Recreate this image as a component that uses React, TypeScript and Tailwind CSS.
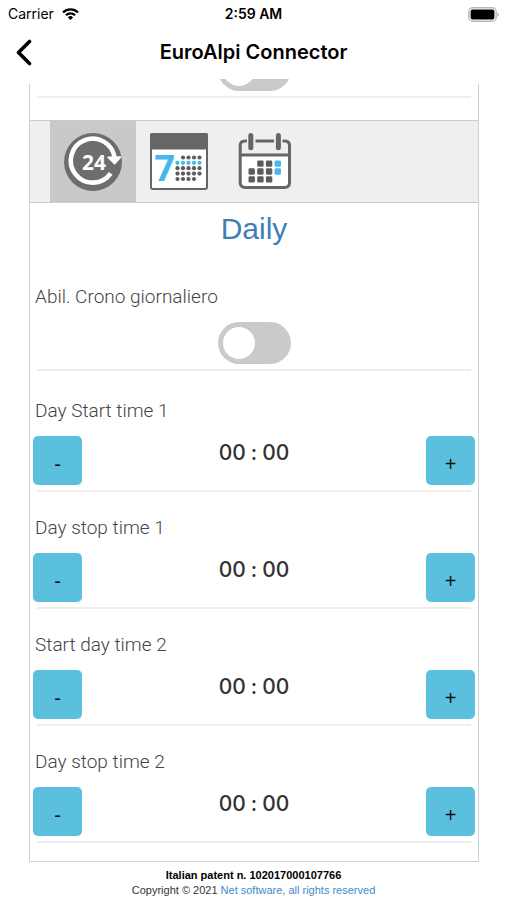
import React, { useState } from 'react';

type Tab = 'daily' | 'weekly' | 'monthly';

interface TimeSlot {
  id: string;
  label: string;
  minutes: number;
}

const STEP = 15;
const DAY = 24 * 60;

const INITIAL_SLOTS: TimeSlot[] = [
  { id: 'start-1', label: 'Day Start time 1', minutes: 0 },
  { id: 'stop-1', label: 'Day stop time 1', minutes: 0 },
  { id: 'start-2', label: 'Start day time 2', minutes: 0 },
  { id: 'stop-2', label: 'Day stop time 2', minutes: 0 },
];

const pad = (n: number) => String(n).padStart(2, '0');

const WifiIcon = () => (
  <svg width="17" height="12" viewBox="0 0 17 12" fill="none" stroke="#000" strokeWidth="2.2">
    <path d="M1 4.4a10.6 10.6 0 0 1 15 0" />
    <path d="M3.9 7.3a6.5 6.5 0 0 1 9.2 0" />
    <path d="M8.5 12 5.9 9.4a3.7 3.7 0 0 1 5.2 0z" fill="#000" stroke="none" />
  </svg>
);

const BatteryIcon = () => (
  <svg width="33" height="15" viewBox="0 0 33 15">
    <rect x="2.8" y="0.8" width="27.4" height="13.4" rx="4" fill="#fff" stroke="#b8b8b8" strokeWidth="1.4" />
    <rect x="4.6" y="2.6" width="23.8" height="9.8" rx="2" fill="#000" />
    <path d="M31.6 5.4c1.4.6 1.4 3.6 0 4.2z" fill="#999" />
  </svg>
);

const DailyIcon = () => (
  <svg width="58" height="58" viewBox="0 0 58 58">
    <circle cx="29" cy="29" r="29" fill="#6d6d6d" />
    <path d="M46.7 40.4A22 22 0 1 1 50.6 25" fill="none" stroke="#fff" strokeWidth="4.6" />
    <path d="M44 24.2 56.600 24 50.6 30.600z" fill="#fff" stroke="#fff" strokeWidth="1.6" strokeLinejoin="round" />
    <text x="30" y="36.500" textAnchor="middle" fontSize="21" fontWeight="700" fontFamily="'Open Sans', sans-serif" fill="#fff">24</text>
  </svg>
);

const WeeklyIcon = () => {
  const xs = [27.5, 33, 38.5, 44, 49.5];
  const ys = [24.5, 29.8, 35.2, 40.6, 46];
  return (
    <svg width="58" height="57" viewBox="0 0 58 57" className="overflow-visible">
      <rect x="1" y="1" width="56" height="55" rx="2" fill="#fff" stroke="#666" strokeWidth="2" />
      <rect x="0" y="0" width="58" height="16.5" rx="1.5" fill="#666" />
      <text x="14.5" y="48" textAnchor="middle" fontSize="36" fontWeight="700" fontFamily="'Open Sans', sans-serif" fill="#43b7ee">7</text>
      {ys.map((y, row) =>
        xs.map((x, col) => {
          if ((row === 0 && col === 0) || (row === 4 && col === 4)) return null;
          return <circle key={`${x}-${y}`} cx={x} cy={y} r="2.1" fill={row === 1 ? '#43b7ee' : '#5c5c5c'} />;
        })
      )}
    </svg>
  );
};

const MonthlyIcon = () => {
  const xs = [13.7, 22.4, 31.1, 39.8];
  const ys = [30.6, 38.5, 46.4];
  return (
    <svg width="54" height="57" viewBox="0 0 54 57">
      <path d="M2 22h49.5v28q0 4.500-4.500 4.500H6.500Q2 54.500 2 50z" fill="#fff" />
      <g fill="none" stroke="#666" strokeWidth="3">
        <path d="M9 8H7Q2.200 8 2.200 12.500V49.500Q2.200 54.500 7.200 54.500H46.500Q51.500 54.500 51.500 49.500V12.500Q51.500 8 46.700 8H44.500" />
        <path d="M17.500 8H36" />
        <path d="M2 22H51.500" />
        <path d="M12.800 2.500V14.800M40.400 2.500V14.800" strokeWidth="5" strokeLinecap="round" />
      </g>
      {ys.map((y, row) =>
        xs.map((x, col) => {
          if ((row === 0 && col === 0) || (row === 2 && col === 3)) return null;
          return <rect key={`${x}-${y}`} x={x - 3.2} y={y - 3.2} width="6.4" height="6.4" rx="1.4" fill={col === 3 ? '#43b7ee' : '#5c5c5c'} />;
        })
      )}
    </svg>
  );
};

const TABS: { id: Tab; title: string; Icon: React.FC }[] = [
  { id: 'daily', title: 'Daily', Icon: DailyIcon },
  { id: 'weekly', title: 'Weekly', Icon: WeeklyIcon },
  { id: 'monthly', title: 'Monthly', Icon: MonthlyIcon },
];

interface SwitchProps {
  id?: string;
  label?: string;
  checked: boolean;
  onChange: (checked: boolean) => void;
}

const Switch: React.FC<SwitchProps> = ({ id, label, checked, onChange }) => (
  <input
    id={id}
    type="checkbox"
    aria-label={label}
    checked={checked}
    onChange={(e) => onChange(e.target.checked)}
    className="relative block h-[42px] w-[73px] shrink-0 cursor-pointer appearance-none rounded-full bg-[#cacaca] transition-colors before:absolute before:left-[5px] before:top-[5px] before:size-8 before:rounded-full before:bg-white before:transition-transform checked:bg-[#5bc0de] checked:before:translate-x-[31px]"
  />
);

const Divider = () => <hr className="mx-[7px] h-0.5 border-0 bg-[#eeeeee]" />;

interface TimeRowProps {
  slot: TimeSlot;
  onStep: (delta: number) => void;
}

const labelText = 'px-[5px] font-[Roboto,sans-serif] text-[19px] leading-6 font-light text-[#444]';
const stepButton = 'size-[49px] rounded-[5px] bg-[#5bc0de] pt-1.5 text-xl leading-6 text-[#111]';

const TimeRow: React.FC<TimeRowProps> = ({ slot, onStep }) => (
  <div className="pt-6" role="group" aria-labelledby={slot.id}>
    <div id={slot.id} className={labelText}>{slot.label}</div>
    <div className="mt-[13px] mb-[5px] flex items-start justify-between px-[3px]">
      <button type="button" className={stepButton} onClick={() => onStep(-STEP)}>-</button>
      <div className="flex gap-[5px] pt-[5px] font-[Inter,sans-serif] text-[21px] leading-6 font-medium text-[#333]">
        <span>{pad(Math.floor(slot.minutes / 60))}</span>
        <span>:</span>
        <span>{pad(slot.minutes % 60)}</span>
      </div>
      <button type="button" className={stepButton} onClick={() => onStep(STEP)}>+</button>
    </div>
    <Divider />
  </div>
);

export default function App() {
  const [tab, setTab] = useState<Tab>('daily');
  const [mainEnabled, setMainEnabled] = useState(false);
  const [dailyEnabled, setDailyEnabled] = useState(false);
  const [slots, setSlots] = useState(INITIAL_SLOTS);

  const handleStep = (id: string, delta: number) => {
    setSlots((prev) =>
      prev.map((s) => (s.id === id ? { ...s, minutes: (s.minutes + delta + DAY) % DAY } : s))
    );
  };

  return (
    <div className="min-h-screen bg-white font-['Liberation_Sans',Arial,sans-serif] text-black">
      {/* Status bar */}
      <div className="grid h-7 grid-cols-3 items-center px-2 font-[Inter,sans-serif] text-sm">
        <div className="flex items-center gap-2">
          <span>Carrier</span>
          <WifiIcon />
        </div>
        <div className="text-center font-semibold">2:59 AM</div>
        <div className="flex justify-end">
          <BatteryIcon />
        </div>
      </div>

      {/* Navigation bar */}
      <header className="grid h-14 grid-cols-[48px_1fr_48px] items-start pt-2">
        <button type="button" aria-label="Back" className="flex h-8 items-center justify-center">
          <svg width="16" height="27" viewBox="0 0 16 27" fill="none" stroke="#000" strokeWidth="3.6" strokeLinecap="round" strokeLinejoin="round">
            <path d="M13.500 2.500 2.500 13.500l11 11" />
          </svg>
        </button>
        <h1 className="text-center font-[Inter,sans-serif] text-xl leading-8 font-semibold">EuroAlpi Connector</h1>
      </header>

      <main className="mr-7 ml-[29px] flow-root border border-t-0 border-[#d0d0d0]">
        <div className="-mt-[5px] flex h-3 items-end justify-center overflow-hidden">
          <Switch label="Crono" checked={mainEnabled} onChange={setMainEnabled} />
        </div>
        <div className="mt-[5px] mb-[22px]">
          <Divider />
        </div>

        <div role="tablist" className="flex h-[83px] border-y border-[#ccc] bg-[#efefef] pl-5">
          {TABS.map(({ id, title, Icon }) => (
            <button
              key={id}
              type="button"
              role="tab"
              aria-label={title}
              aria-selected={tab === id}
              onClick={() => setTab(id)}
              className={`flex w-[86px] items-center justify-center ${tab === id ? 'bg-[#c9c9c9]' : ''}`}
            >
              <Icon />
            </button>
          ))}
        </div>

        <h2 className="mt-2 mb-[14px] text-center text-3xl leading-9 text-[#3f7fb5]">
          {TABS.find((t) => t.id === tab)?.title}
        </h2>

        <div className="mb-1 pt-6">
          <label htmlFor="daily-switch" className={`block ${labelText}`}>
            Abil. Crono giornaliero
          </label>
          <div className="mt-[13px] mb-[5px] flex justify-center">
            <Switch id="daily-switch" checked={dailyEnabled} onChange={setDailyEnabled} />
          </div>
          <Divider />
        </div>

        <div className="pb-[18px]">
          {slots.map((slot) => (
            <TimeRow key={slot.id} slot={slot} onStep={(delta) => handleStep(slot.id, delta)} />
          ))}
        </div>
      </main>

      <footer className="pt-1.5 text-center text-[11px] leading-[15px]">
        <p className="font-bold">Italian patent n. 102017000107766</p>
        <p className="text-[#333]">
          Copyright © 2021 <a href="#" className="text-[#428bca]">Net software, all rights reserved</a>
        </p>
      </footer>
    </div>
  );
}
